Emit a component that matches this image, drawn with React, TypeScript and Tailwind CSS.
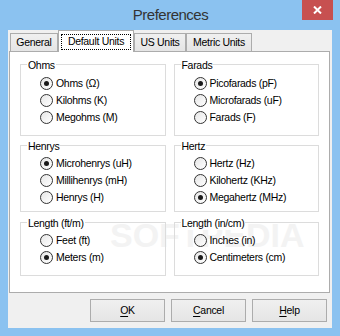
import React from "react";

const FONT = '"Liberation Sans", Arial, sans-serif';
const TXT = "text-[10.5px] tracking-[-0.3px] leading-[13px] text-black whitespace-nowrap";

function Radio({ checked, label }: { checked?: boolean; label: string }) {
  return (
    <div className="flex items-center h-[17px]">
      <span className="w-[13px] h-[13px] rounded-full border border-[#333333] bg-gradient-to-br from-[#e6e6e6] to-white flex items-center justify-center shrink-0">
        {checked && <span className="w-[5px] h-[5px] rounded-full bg-[#1a1a1a]" />}
      </span>
      <span className={`ml-[3px] ${TXT}`}>{label}</span>
    </div>
  );
}

function Group({
  title,
  h,
  pt,
  items,
}: {
  title: string;
  h: string;
  pt: string;
  items: { label: string; checked?: boolean }[];
}) {
  return (
    <div className={`relative border border-[#dcdcdc] ${h} ${pt} pl-[19px]`}>
      <span className={`absolute -top-[6px] left-[6px] px-[1px] bg-white ${TXT}`}>{title}</span>
      {items.map((it) => (
        <Radio key={it.label} label={it.label} checked={it.checked} />
      ))}
    </div>
  );
}

function Btn({ u, rest }: { u: string; rest: string }) {
  return (
    <div className={`w-[75px] h-[23px] border border-[#acacac] bg-gradient-to-b from-[#f0f0f0] to-[#e5e5e5] flex items-center justify-center ${TXT}`}>
      <span>
        <span className="underline underline-offset-2">{u}</span>
        {rest}
      </span>
    </div>
  );
}

const TAB = `h-[18px] border border-b-0 border-[#acacac] bg-gradient-to-b from-[#f0f0f0] to-[#e5e5e5] flex items-center justify-center ${TXT}`;

export default function App() {
  return (
    <div className="w-[340px] h-[336px] bg-[#8bc2f0] flex flex-col" style={{ fontFamily: FONT }}>
      <div className="relative h-[30px] flex items-center justify-center">
        <span className="text-[15px] tracking-[-0.5px] text-[#333333] mt-[1px] ml-[1px]">Preferences</span>
        <div className="absolute right-[7px] top-0 w-[31px] h-[20px] bg-[#c75050] flex items-center justify-center">
          <svg width="9" height="8" viewBox="0 0 9 8">
            <path d="M1 0.5 L8 7.5 M8 0.5 L1 7.5" stroke="white" strokeWidth="2" />
          </svg>
        </div>
      </div>
      <div className="mx-[8px] h-[298px] bg-[#f0f0f0] flex flex-col">
        <div className="h-[21px] pl-[2px] flex items-end">
          <div className={`w-[48px] ${TAB}`}>General</div>
          <div className={`relative z-10 -mb-px w-[76px] h-[22px] border border-b-0 border-[#acacac] bg-white flex items-center justify-center ${TXT}`}>
            <span className="border border-dotted border-black w-[70px] h-[16px] flex items-center justify-center">
              Default Units
            </span>
          </div>
          <div className={`w-[52px] ${TAB}`}>US Units</div>
          <div className={`w-[66px] ${TAB}`}>Metric Units</div>
        </div>
        <div className="relative ml-[1px] w-[321px] h-[242px] border border-[#acacac] bg-white pt-[12px] px-[10px] overflow-hidden">
          <div className="absolute left-[100px] top-[163px] text-[34px] leading-[40px] font-bold text-[#f3f3f3] whitespace-nowrap">
            SOFTPEDIA
          </div>
          <div className="grid grid-cols-2 gap-x-[8px]">
            <Group
              title="Ohms"
              h="h-[72px]"
              pt="pt-[10px]"
              items={[
                { label: "Ohms (Ω)", checked: true },
                { label: "Kilohms (K)" },
                { label: "Megohms (M)" },
              ]}
            />
            <Group
              title="Farads"
              h="h-[72px]"
              pt="pt-[10px]"
              items={[
                { label: "Picofarads (pF)", checked: true },
                { label: "Microfarads (uF)" },
                { label: "Farads (F)" },
              ]}
            />
          </div>
          <div className="grid grid-cols-2 gap-x-[8px] mt-[9px]">
            <Group
              title="Henrys"
              h="h-[67px]"
              pt="pt-[9px]"
              items={[
                { label: "Microhenrys (uH)", checked: true },
                { label: "Millihenrys (mH)" },
                { label: "Henrys (H)" },
              ]}
            />
            <Group
              title="Hertz"
              h="h-[67px]"
              pt="pt-[9px]"
              items={[
                { label: "Hertz (Hz)" },
                { label: "Kilohertz (KHz)" },
                { label: "Megahertz (MHz)", checked: true },
              ]}
            />
          </div>
          <div className="grid grid-cols-2 gap-x-[8px] mt-[10px]">
            <Group
              title="Length (ft/m)"
              h="h-[54px]"
              pt="pt-[9px]"
              items={[{ label: "Feet (ft)" }, { label: "Meters (m)", checked: true }]}
            />
            <Group
              title="Length (in/cm)"
              h="h-[54px]"
              pt="pt-[9px]"
              items={[{ label: "Inches (in)" }, { label: "Centimeters (cm)", checked: true }]}
            />
          </div>
        </div>
        <div className="mt-[6px] flex justify-end gap-[6px] pr-[5px]">
          <Btn u="O" rest="K" />
          <Btn u="C" rest="ancel" />
          <Btn u="H" rest="elp" />
        </div>
      </div>
    </div>
  );
}
